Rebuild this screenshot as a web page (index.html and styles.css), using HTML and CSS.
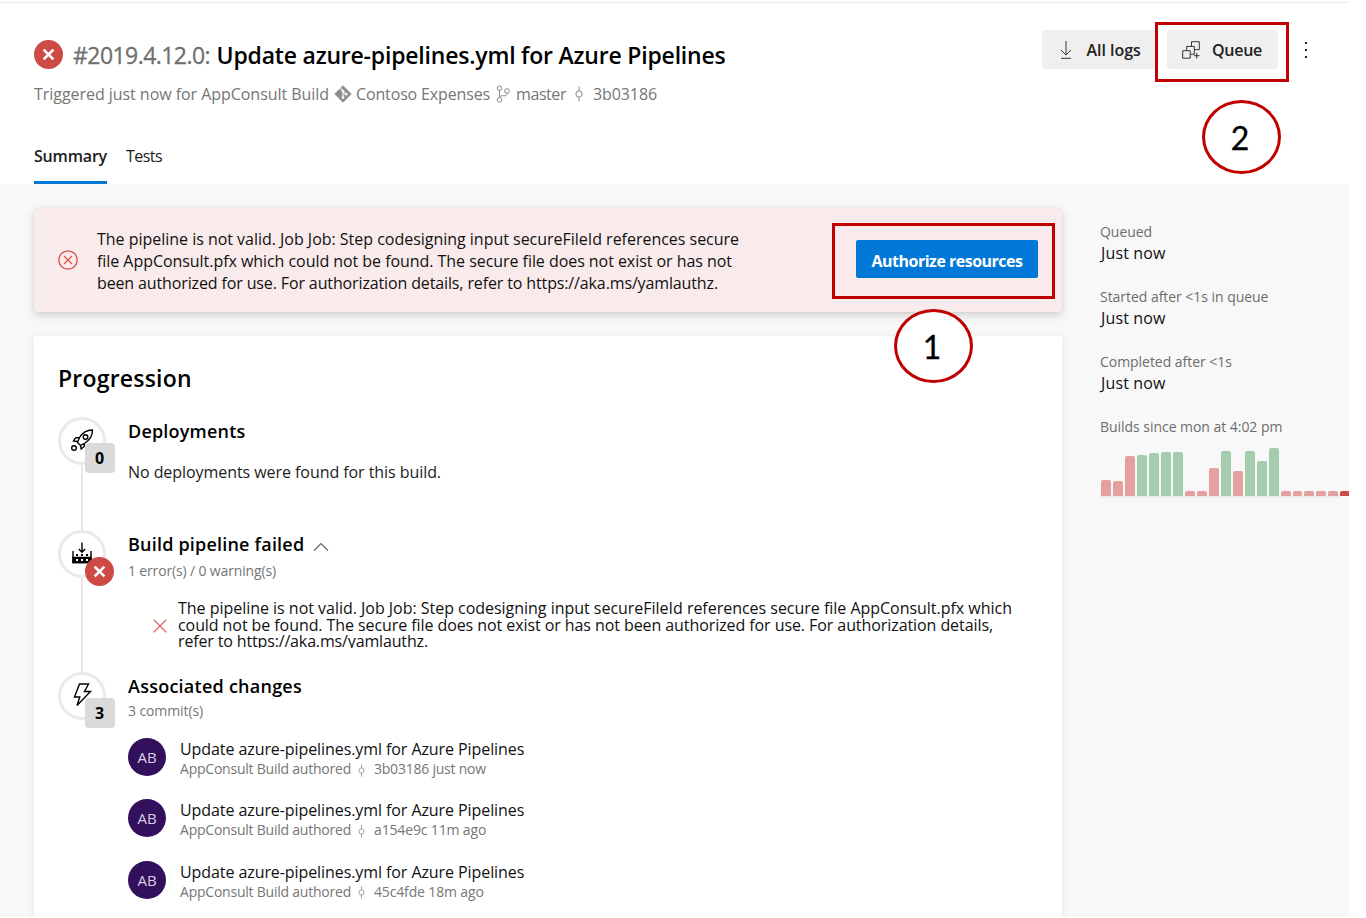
FILE: index.html
```html
<!DOCTYPE html>
<html lang="en">
<head>
<meta charset="utf-8">
<title>Update azure-pipelines.yml for Azure Pipelines</title>
<link rel="stylesheet" href="styles.css">
</head>
<body>
<svg class="defs" width="0" height="0">
  <symbol id="commit" viewBox="0 0 10 16"><path d="M5 .5v4.3M5 11v4.5" /><ellipse cx="5" cy="8" rx="3.1" ry="3.2"/></symbol>
  <symbol id="fail" viewBox="0 0 29 29"><circle cx="14.5" cy="14.5" r="14.5" fill="#cd4a45"/><path d="M9.6 9.6l9.8 9.8M19.4 9.6l-9.8 9.8" stroke="#fff" stroke-width="2.7"/></symbol>
</svg>
<div class="page">
  <header class="header">
    <div class="header-main">
      <div class="title-row">
        <svg class="fail-icon"><use href="#fail"/></svg>
        <h1 class="title"><span class="run-number">#2019.4.12.0:</span><span class="run-name">Update azure-pipelines.yml for Azure Pipelines</span></h1>
      </div>
      <div class="subtitle">
        <span class="trigger">Triggered just now for AppConsult Build</span>
        <svg class="git-icon" viewBox="0 0 18 18"><path d="M9 .8L17.2 9 9 17.2.8 9z" fill="#8f8f8f" stroke="#8f8f8f" stroke-linejoin="round"/><path d="M6.400 3.400L9 6v7M9 6.400l3.300 3" stroke="#fff" stroke-width="1.100" fill="none"/><circle cx="9" cy="6" r="1.300" fill="#fff"/><circle cx="9" cy="12.600" r="1.300" fill="#fff"/><circle cx="12.200" cy="9.300" r="1.300" fill="#fff"/></svg>
        <span class="repo">Contoso Expenses</span>
        <svg class="branch-icon" viewBox="0 0 14 18"><circle cx="3.500" cy="3.200" r="2.300"/><circle cx="3.500" cy="14.800" r="2.300"/><circle cx="11" cy="6" r="2.300"/><path d="M3.500 5.500v7M11 8.300c0 2.200-1 2.500-3 2.500H6c-1.500 0-2.500.6-2.500 1.700"/></svg>
        <span class="branch">master</span>
        <svg class="commit-lg"><use href="#commit"/></svg>
        <span class="hash">3b03186</span>
      </div>
      <nav class="tabs">
        <a class="tab active">Summary</a>
        <a class="tab">Tests</a>
      </nav>
    </div>
    <div class="actions">
      <button class="btn logs"><svg class="dl-icon" viewBox="0 0 14 18"><path d="M7 0v13.500M2 9l5 5 5-5M2 17.300h10"/></svg><span>All logs</span></button>
      <button class="btn queue"><svg class="queue-icon" viewBox="0 0 18 18"><path d="M.7 9.700h7.500v7.500H.7zM4.700 9.500V5.400h7.600v7.800H8.400M9.500 5.200V.7h7.800v8h-4.800M14.700 12v5.500M12 14.700h5.500"/></svg><span>Queue</span></button>
      <svg class="more-icon" viewBox="0 0 4 18"><path d="M1 1h2v2H1zM1 8h2v2H1zM1 15h2v2H1z"/></svg>
    </div>
  </header>
  <div class="content">
    <main class="main">
      <section class="banner">
        <svg class="error-icon" viewBox="0 0 20 20"><circle cx="10" cy="10" r="9.200"/><path d="M6 6l8 8M14 6l-8 8"/></svg>
        <p class="banner-text"><span>The pipeline is not valid. Job Job: Step codesigning input secureFileId references secure</span><br><span>file AppConsult.pfx which could not be found. The secure file does not exist or has not</span><br><span>been authorized for use. For authorization details, refer to https://aka.ms/yamlauthz.</span></p>
        <button class="authorize">Authorize resources</button>
      </section>
      <section class="card">
        <h2 class="card-title">Progression</h2>
        <div class="step deployments">
          <div class="rail"><div class="node"><svg class="node-icon" viewBox="0 0 24 24"><path d="M22.500 2c-6 0-10 2.500-13 7.500l-2 5 3 3 4.500-2.500c4.500-3 7.500-7 7.500-13zM9.500 9.500L5.500 9.800 3.500 13l4 .5M14.500 15l-.3 3.500-3 2.500-.7-3.500M7.500 14.500l3 3"/><circle cx="15.500" cy="9" r="2.300"/><circle cx="4" cy="20" r="2.300"/></svg><span class="count">0</span></div></div>
          <div class="step-body">
            <h3><span>Deployments</span></h3>
            <p class="none">No deployments were found for this build.</p>
          </div>
        </div>
        <div class="step build">
          <div class="rail"><div class="node"><svg class="node-icon" viewBox="0 0 24 24"><path d="M12 1.500V11M8.800 8l3.200 3.200L15.200 8M3 10v11.500h18V10"/><path class="solid" d="M3 16.500h18v5H3z"/><path class="dots" d="M6 14h2M11 14h2M16 14h2"/><path class="holes" d="M6 19h2M11 19h2M16 19h2"/></svg><svg class="node-fail"><use href="#fail"/></svg></div></div>
          <div class="step-body">
            <h3><span>Build pipeline failed</span><svg class="chevron" viewBox="0 0 16 10"><path d="M1 8.500l7-7 7 7"/></svg></h3>
            <p class="meta">1 error(s) / 0 warning(s)</p>
            <div class="issue">
              <svg class="x-icon" viewBox="0 0 14 14"><path d="M.7.7l12.600 12.600M13.300.7L.7 13.300"/></svg>
              <p class="issue-text"><span>The pipeline is not valid. Job Job: Step codesigning input secureFileId references secure file AppConsult.pfx which</span><br><span>could not be found. The secure file does not exist or has not been authorized for use. For authorization details,</span><br><span>refer to https://aka.ms/yamlauthz.</span></p>
            </div>
          </div>
        </div>
        <div class="step changes">
          <div class="rail"><div class="node"><svg class="node-icon" viewBox="0 0 24 24"><path d="M9.500 1h9l-4 7.500h6L7 22.500l2.800-8.500H4.500z"/></svg><span class="count">3</span></div></div>
          <div class="step-body">
            <h3><span>Associated changes</span></h3>
            <p class="meta">3 commit(s)</p>
            <ul class="commits">
              <li><span class="avatar">AB</span><div><p class="msg">Update azure-pipelines.yml for Azure Pipelines</p><p class="by"><span>AppConsult Build authored</span><svg class="commit-sm"><use href="#commit"/></svg><span>3b03186 just now</span></p></div></li>
              <li><span class="avatar">AB</span><div><p class="msg">Update azure-pipelines.yml for Azure Pipelines</p><p class="by"><span>AppConsult Build authored</span><svg class="commit-sm"><use href="#commit"/></svg><span>a154e9c 11m ago</span></p></div></li>
              <li><span class="avatar">AB</span><div><p class="msg">Update azure-pipelines.yml for Azure Pipelines</p><p class="by"><span>AppConsult Build authored</span><svg class="commit-sm"><use href="#commit"/></svg><span>45c4fde 18m ago</span></p></div></li>
            </ul>
          </div>
        </div>
      </section>
    </main>
    <aside class="side">
      <dl>
        <dt>Queued</dt><dd>Just now</dd>
        <dt>Started after &lt;1s in queue</dt><dd>Just now</dd>
        <dt>Completed after &lt;1s</dt><dd>Just now</dd>
        <dt>Builds since mon at 4:02 pm</dt>
      </dl>
      <div class="chart">
        <i class="bad" style="height:16.500px"></i><i class="bad" style="height:15.500px"></i><i class="bad" style="height:40.500px"></i><i class="ok" style="height:41px"></i><i class="ok" style="height:43px"></i><i class="ok" style="height:44px"></i><i class="ok" style="height:44px"></i><i class="bad" style="height:5px"></i><i class="bad" style="height:5px"></i><i class="bad" style="height:28px"></i><i class="ok" style="height:45px"></i><i class="bad" style="height:25px"></i><i class="ok" style="height:45px"></i><i class="ok" style="height:35px"></i><i class="ok" style="height:48px"></i><i class="bad" style="height:5px"></i><i class="bad" style="height:5px"></i><i class="bad" style="height:5px"></i><i class="bad" style="height:5px"></i><i class="bad" style="height:5px"></i><i class="current" style="height:5px"></i>
      </div>
      <div class="axis"></div>
    </aside>
  </div>
  <div class="frame frame-1"></div>
  <div class="marker marker-1">1</div>
  <div class="frame frame-2"></div>
  <div class="marker marker-2">2</div>
</div>
</body>
</html>
```
FILE: styles.css
```css
* { box-sizing: border-box; }
body { margin: 0; background: #fff; color: #1c1c1c; font: 16px/22px "Open Sans", "Noto Sans", sans-serif; overflow: hidden; }
h1, h2, h3, p, ul, dl, dd { margin: 0; padding: 0; font-weight: 400; }
span, p, dt { white-space: nowrap; }
svg { display: block; flex: none; fill: none; }
.defs { position: absolute; }
.page { position: relative; width: 1349px; height: 917px; overflow: hidden; display: flex; flex-direction: column; }

.header { flex: none; height: 184px; padding: 0 41px 0 34px; display: flex; justify-content: space-between; background: linear-gradient(#eaeaea, #eaeaea) 0 2px / 100% 1px no-repeat; }
.header-main { padding-top: 39px; }
.title-row { display: flex; align-items: center; height: 32px; }
.fail-icon { width: 29px; height: 29px; margin: -1px 10px 0 0; }
.title { display: flex; gap: 6.500px; font-size: 23px; line-height: 32px; }
.run-number { color: #6f6f6f; letter-spacing: -.556px; -webkit-text-stroke: .3px #6f6f6f; }
.run-name { color: #000; font-weight: 600; letter-spacing: -.202px; }
.subtitle { display: flex; align-items: center; height: 24px; margin-top: 11px; color: #767676; }
.trigger { letter-spacing: -.046px; }
.repo { letter-spacing: -.146px; }
.branch { letter-spacing: -.427px; }
.hash { letter-spacing: -.098px; }
.git-icon { width: 18px; height: 18px; margin: 0 4px 0 5px; }
.branch-icon { width: 14px; height: 18px; margin: 0 6px; stroke: #8a8a8a; stroke-width: 1; }
.commit-lg { width: 10px; height: 16px; margin: 0 9px 0 8px; stroke: #8a8a8a; }
.tabs { display: flex; gap: 19px; margin-top: 22px; height: 56px; line-height: 56px; }
.tab { letter-spacing: -.55px; }
.tab.active { font-weight: 600; letter-spacing: -.179px; border-bottom: 3px solid #0078d4; }

.actions { display: flex; height: 39px; margin-top: 30px; }
.btn { display: flex; align-items: center; border: 0; border-radius: 3px; background: #efefef; padding: 0; font: 600 16px/22px "Open Sans", sans-serif; color: #222; }
.logs { width: 114px; padding-left: 17px; gap: 13.500px; letter-spacing: -.02px; }
.queue { width: 111px; margin-left: 11px; padding-left: 15px; gap: 12px; letter-spacing: -.272px; }
.dl-icon { width: 14px; height: 18px; stroke: #333; }
.queue-icon { width: 18px; height: 18px; stroke: #333; }
.more-icon { width: 4px; height: 18px; fill: #222; margin: 11px 0 0 26px; }

.content { flex: 1; min-height: 0; display: flex; background: #f8f8f8; padding: 24px 0 0 34px; }
.main { width: 1028px; flex: none; display: flex; flex-direction: column; }
.banner { flex: none; height: 104px; border-radius: 4px; background: #f9ebeb; box-shadow: 0 3px 8px rgba(0,0,0,.17), 0 0 2px rgba(0,0,0,.07); display: flex; align-items: center; padding: 0 24px; color: #111; }
.error-icon { width: 20px; height: 20px; margin-top: -1px; stroke: #d9534f; stroke-width: 1.300; }
.banner-text { margin-left: 19px; width: 759px; padding-top: 1px; }
.banner-text span:nth-of-type(1) { letter-spacing: -.020px; }
.banner-text span:nth-of-type(2) { letter-spacing: -.050px; }
.banner-text span:nth-of-type(3) { letter-spacing: -.130px; }
.authorize { width: 182px; height: 38px; border: 0; border-radius: 2px; background: #0078d7; color: #fff; font: 700 16px/22px "Open Sans", sans-serif; letter-spacing: -.499px; padding: 4px 0 0; margin-bottom: 2px; }
.card { flex: none; margin-top: 24px; height: 620px; background: #fff; box-shadow: 0 2px 10px rgba(0,0,0,.08); padding: 26px 24px 0; }
.card-title { height: 55px; line-height: 33px; font-size: 23px; font-weight: 600; letter-spacing: .2px; color: #000; }
.step { display: flex; }
.deployments { height: 113px; }
.build { height: 142px; }
.rail { width: 48px; display: flex; flex-direction: column; align-items: center; margin-right: 22px; }
.rail::after { content: ""; width: 2px; flex: 1; background: #e8e8e8; }
.changes .rail::after { display: none; }
.node { position: relative; flex: none; width: 48px; height: 48px; border: 3px solid #eaeaea; border-radius: 50%; display: flex; align-items: center; justify-content: center; }
.node-icon { width: 24px; height: 24px; stroke: #000; stroke-width: 1.400; margin-bottom: 2px; }
.solid { fill: #000; }
.dots { stroke-width: 2; }
.holes { stroke: #fff; stroke-width: 2; }
.count { position: absolute; left: 24px; top: 23px; width: 30px; height: 30px; border-radius: 4px; background: #dadada; color: #000; font-weight: 700; font-size: 16px; line-height: 31px; text-align: center; padding-right: 1px; }
.node-fail { position: absolute; left: 24px; top: 24px; width: 29px; height: 29px; }
.step-body { padding-top: 2px; }
h3 { display: flex; align-items: center; height: 24px; font-size: 18px; line-height: 24px; color: #000; }
h3 span { font-weight: 600; letter-spacing: .2px; }
.changes h3 span { letter-spacing: .247px; }
.none { margin-top: 18px; letter-spacing: -.061px; }
.chevron { width: 16px; height: 10px; margin: 5px 0 0 9px; stroke: #666; stroke-width: 1.200; }
.meta { font-size: 14px; line-height: 20px; color: #767676; margin-top: 5px; letter-spacing: -.15px; }
.changes .meta { margin-top: 3px; letter-spacing: -.1px; }
.issue { display: flex; align-items: center; padding-left: 25px; margin-top: 19px; }
.x-icon { width: 14px; height: 14px; margin: 4px 11px 0 0; stroke: #d9534f; stroke-width: 1.200; }
.issue-text { height: 48px; line-height: 16.500px; overflow: hidden; color: #111; }
.issue-text span:nth-of-type(1) { letter-spacing: -.023px; }
.issue-text span:nth-of-type(2) { letter-spacing: -.077px; }
.issue-text span:nth-of-type(3) { letter-spacing: -.148px; }
.commits { list-style: none; margin-top: 17px; }
.commits li { display: flex; gap: 14px; height: 61.300px; }
.avatar { flex: none; width: 38px; height: 38px; border-radius: 50%; background: #32105c; color: #d8cfe2; font-size: 15px; line-height: 38px; text-align: center; }
.msg { line-height: 22px; color: #111; letter-spacing: -.08px; }
.by { display: flex; align-items: center; height: 18px; font-size: 14px; color: #767676; letter-spacing: -.226px; }
.commits li + li .by span:last-child { letter-spacing: -.15px; }
.commit-sm { width: 9px; height: 13px; margin: 2px 8px 0 6px; stroke: #8a8a8a; }

.side { margin-left: 38px; width: 249px; flex: none; }
dl { padding-top: 14px; }
dt { font-size: 14px; line-height: 20px; color: #6d6d6d; letter-spacing: -.04px; }
dd { line-height: 22px; margin-bottom: 23px; padding-left: 1px; color: #111; letter-spacing: .15px; }
.chart { display: flex; align-items: flex-end; gap: 2px; height: 49px; margin: 10px 0 0 1px; overflow: hidden; }
.chart i { flex: none; width: 9.970px; border-radius: 2px 2px 0 0; }
.bad { background: #e3a09e; }
.ok { background: #a5cdad; }
.current { background: #cd4a45; }
.axis { width: 239px; height: 2px; background: #ececec; }

/* Annotation overlays */
.frame { position: absolute; border: 3px solid #c00000; }
.frame-1 { left: 832px; top: 223px; width: 223px; height: 76px; }
.frame-2 { left: 1155px; top: 22px; width: 134px; height: 60px; }
.marker { position: absolute; width: 79px; height: 74px; border: 3px solid #c00000; border-radius: 50%; background: #fff; color: #000; font: 32px/70px Lato, sans-serif; -webkit-text-stroke: .3px #000; text-align: center; padding-right: 3px; }
.marker-1 { left: 894px; top: 309px; }
.marker-2 { left: 1202px; top: 100px; }
```
